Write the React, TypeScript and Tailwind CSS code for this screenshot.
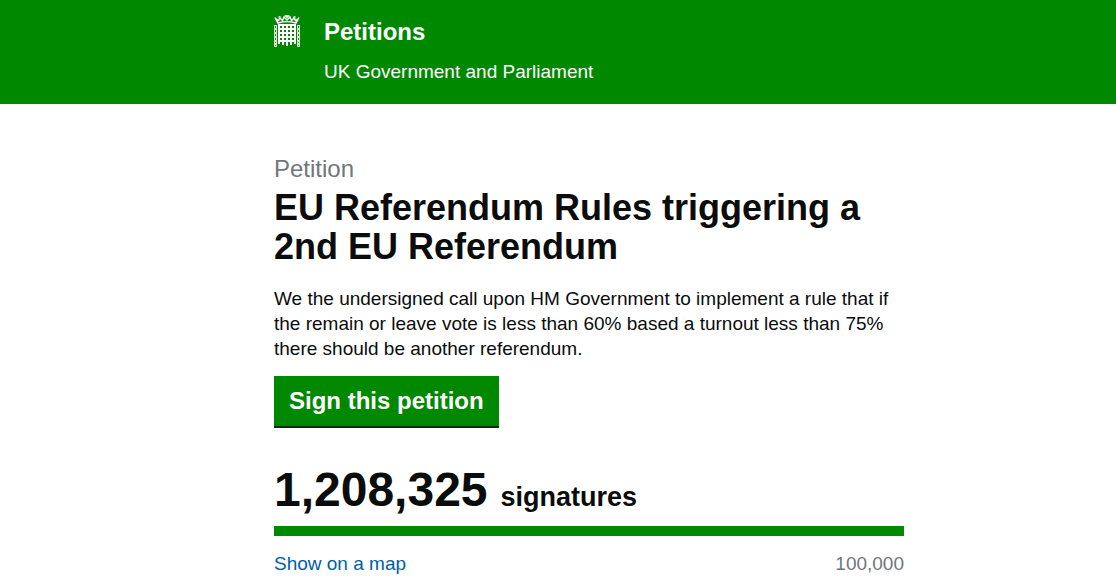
import React from "react";

function Portcullis() {
  return (
    <svg
      className="mt-[-1px] mr-6 h-8 w-[26px] shrink-0"
      viewBox="0 0 26 32"
      fill="none"
      stroke="currentColor"
      aria-hidden="true"
    >
      {/* crown */}
      <path
        strokeWidth="1.500"
        d="M1 2.500L4 8Q13 5 22 8L25 2.500M1.500 3.500l3 2 1.500-2.500 2.500 2.500L10 2l3 3 3-3 1.500 3.500L20 3l1.500 2.500 3-2"
      />
      <path strokeWidth="1.500" d="M10.500 1h5M13 0v3M4.500 2h2M19.500 2h2" />
      {/* grille */}
      <path strokeWidth="2" d="M4 10h18M4 14h18M4 18h18M4 22h18M4 26h18" />
      <path strokeWidth="2" d="M5 9v20M9 9v21M13 9v22M17 9v21M21 9v20" />
      {/* chains */}
      <path
        strokeWidth="1"
        d="M.5 10.500h2v3h-2zM.5 14.500h2v3h-2zM.5 18.500h2v3h-2zM.5 22.500h2v3h-2zM.5 26.500h2v2h-2zM.5 29.500h2v2h-2z"
      />
      <path
        strokeWidth="1"
        d="M23.500 10.500h2v3h-2zM23.500 14.500h2v3h-2zM23.500 18.500h2v3h-2zM23.500 22.500h2v3h-2zM23.500 26.500h2v2h-2zM23.500 29.500h2v2h-2z"
      />
    </svg>
  );
}

function Header() {
  return (
    <header className="bg-[#008800] text-white">
      <div className="mx-auto flex max-w-[692px] items-start pt-4 pb-[18px] pl-[62px]">
        <Portcullis />
        <div>
          <a href="/" className="block text-2xl font-bold leading-8">
            Petitions
          </a>
          <p className="mt-[10px] text-[19px] leading-7">
            UK Government and Parliament
          </p>
        </div>
      </div>
    </header>
  );
}

function App() {
  return (
    <div className="font-['Liberation_Sans',Arial,sans-serif] text-[#0b0c0c]">
      <Header />
      <main className="mx-auto max-w-[692px] pt-12 pl-[62px]">
        <h1>
          <span className="mb-[2px] block text-2xl leading-[34px] text-[#6f777b]">
            Petition
          </span>
          <span className="block text-4xl font-bold leading-[39px]">
            EU Referendum Rules triggering a 2nd EU Referendum
          </span>
        </h1>
        <p className="mt-5 text-[19px] leading-[25px]">
          We the undersigned call upon HM Government to implement a rule that if
          the remain or leave vote is less than 60% based a turnout less than
          75% there should be another referendum.
        </p>
        <button
          type="button"
          className="mt-[15px] block border-b-2 border-[#003300] bg-[#008800] px-[15px] py-[9px] text-2xl font-bold text-white"
        >
          Sign this petition
        </button>
        <p className="mt-9 mb-2 flex items-baseline gap-[13px] font-bold">
          <span className="text-5xl leading-[52px]">1,208,325</span>
          <span className="text-[27px]">signatures</span>
        </p>
        <div className="h-[10px] bg-[#008800]" />
        <div className="mt-[14px] flex justify-between text-[19px]">
          <a href="/map" className="text-[#005ea5]">
            Show on a map
          </a>
          <span className="text-[#6f777b]">100,000</span>
        </div>
      </main>
    </div>
  );
}

export default App;
